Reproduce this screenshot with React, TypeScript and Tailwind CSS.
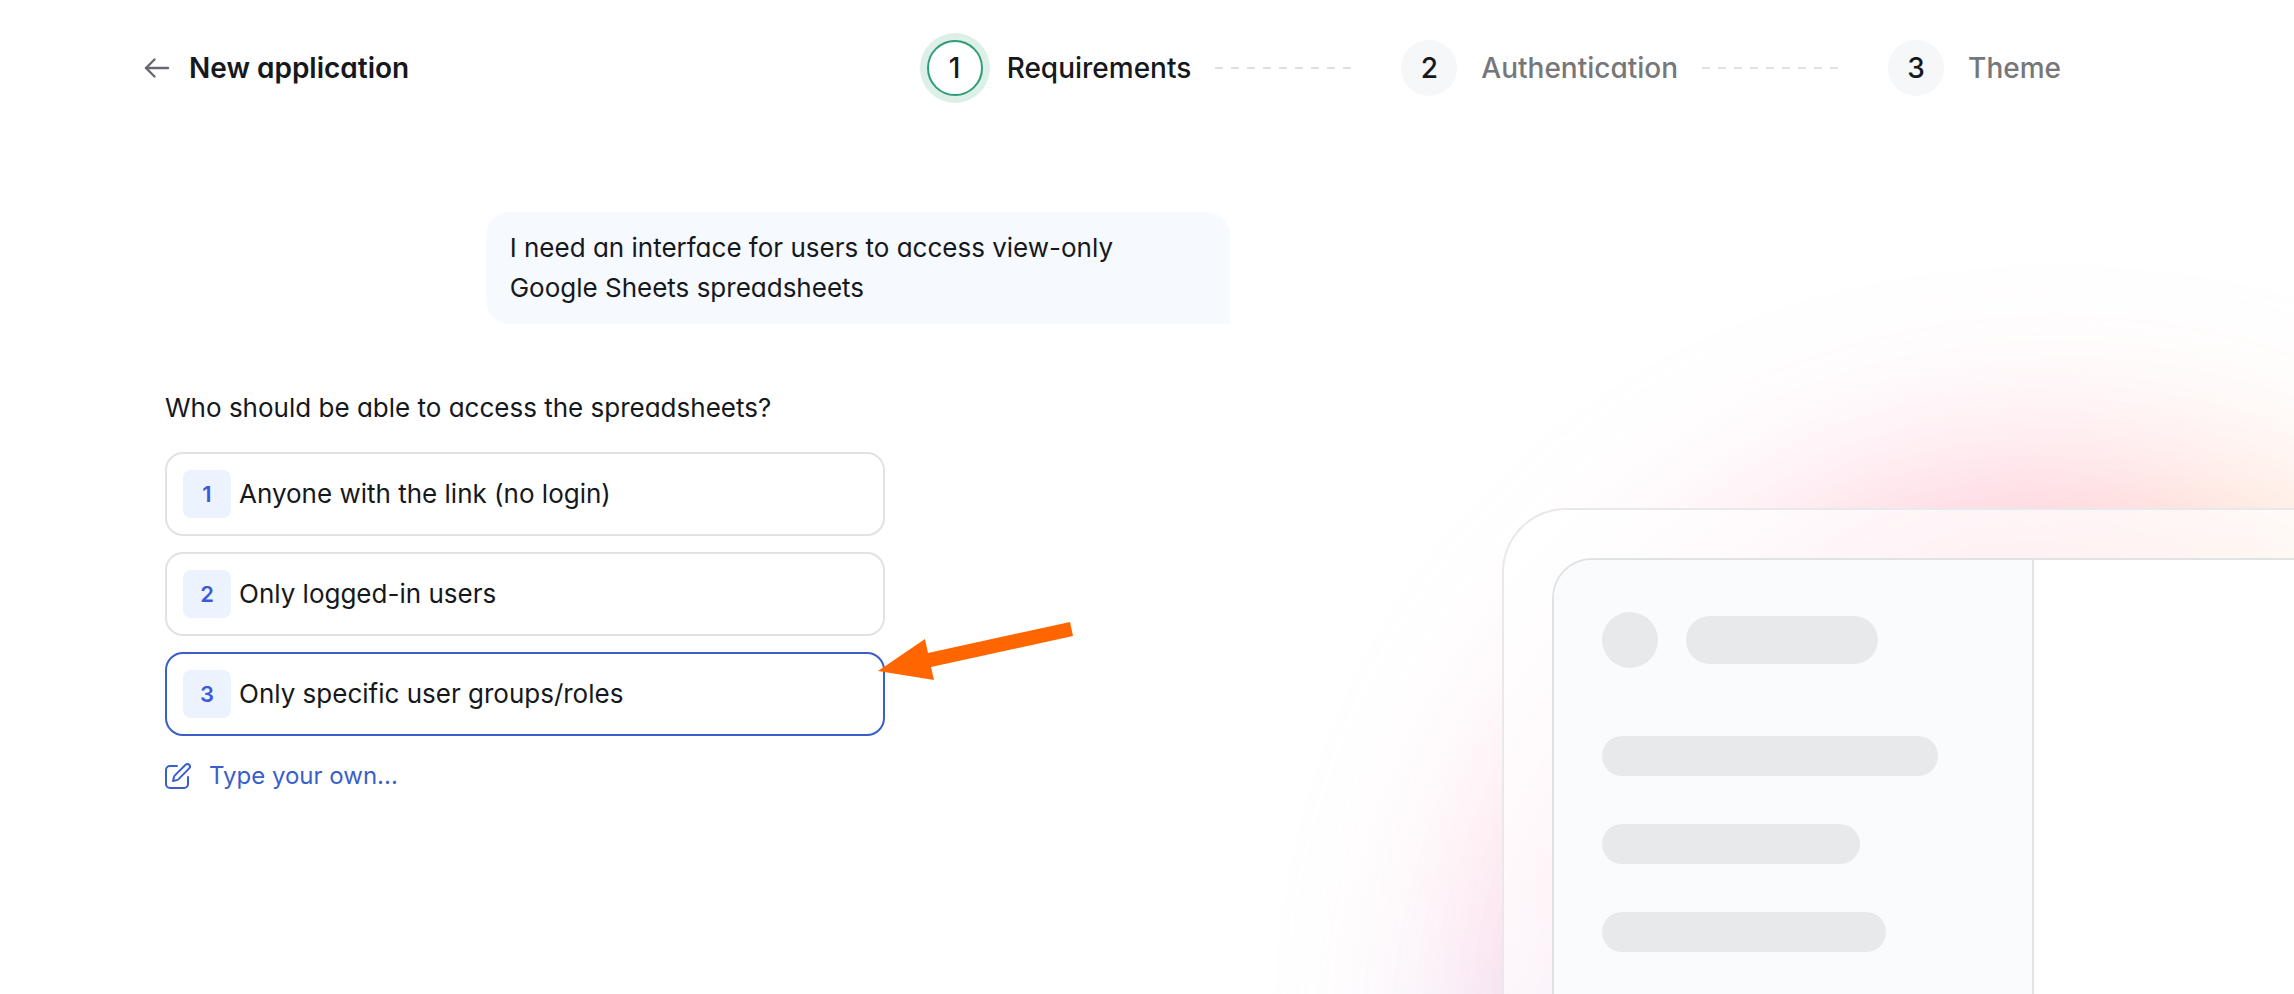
import { useState } from "react";
import clsx from "clsx";

const steps = ["Requirements", "Authentication", "Theme"];

const options = [
  "Anyone with the link (no login)",
  "Only logged-in users",
  "Only specific user groups/roles",
];

const skeletonRows = ["w-[336px]", "w-[258px]", "w-[284px]"];

const Stepper: React.FC<{ current: number }> = ({ current }) => {
  return (
    <ol className="flex items-center gap-12">
      {steps.map((step, index) => (
        <li key={step} className="flex items-center gap-6">
          <span
            className={clsx(
              "flex size-14 items-center justify-center rounded-full font-medium",
              index === current
                ? "border-2 border-[#2f9e77] bg-white ring-[7px] ring-[#dcf0e8]"
                : "bg-[#f5f7f9]",
            )}
          >
            {index + 1}
          </span>
          <span
            className={clsx("font-medium", index !== current && "text-[#76777a]")}
          >
            {step}
          </span>
          {index < steps.length - 1 && (
            <span className="h-0.5 w-[138px] bg-[repeating-linear-gradient(90deg,#e0e1e2_0_8px,transparent_8px_16px)]" />
          )}
        </li>
      ))}
    </ol>
  );
};

const BackIcon: React.FC = () => (
  <svg
    viewBox="0 0 28 28"
    fill="none"
    stroke="currentColor"
    strokeWidth="2.4"
    strokeLinecap="round"
    strokeLinejoin="round"
    className="size-7 text-[#686872]"
  >
    <path d="M25 14H3" />
    <path d="M11.5 5.5 3 14l8.5 8.5" />
  </svg>
);

const EditIcon: React.FC = () => (
  <svg
    viewBox="0 0 26 26"
    fill="none"
    stroke="currentColor"
    strokeWidth="2"
    strokeLinecap="round"
    strokeLinejoin="round"
    className="size-[26px]"
  >
    <path d="M12 3H5a4 4 0 0 0-4 4v14a4 4 0 0 0 4 4h14a4 4 0 0 0 4-4v-7" />
    <path d="M20.6 1.8a2.5 2.5 0 0 1 3.6 3.6L13.6 16.1a4 4 0 0 1-1.8 1L8 18l.9-3.8a4 4 0 0 1 1-1.8z" />
  </svg>
);

const Pointer: React.FC = () => (
  <svg
    viewBox="0 0 195 60"
    className="pointer-events-none absolute -top-8 right-0 h-[60px] w-[195px] translate-x-[188px]"
  >
    <path d="M0 51 47 19 50 33 192 2 195 16 53 47 56 60Z" fill="#ff6600" />
  </svg>
);

const Preview: React.FC = () => {
  return (
    <div className="relative flex flex-1 overflow-hidden pt-[372px] pl-60">
      <div className="absolute top-[364px] left-[244px] size-[1100px] rounded-full bg-[conic-gradient(#ff9cb8_0deg,#ffc08c_28deg,#ffe0a0_60deg,#ffd0e0_150deg,#a898f4_240deg,#c0a4f4_262deg,#ffb0c8_282deg,#ffb4c8_330deg,#ff94b4_352deg,#ff9cb8_360deg)] opacity-75 blur-[110px]" />
      <div className="relative flex flex-1 rounded-tl-[64px] border-t-2 border-l-2 border-[#e9e8ea] bg-white/70 pt-12 pl-12">
        <div className="flex flex-1 overflow-hidden rounded-tl-[40px] border-t-2 border-l-2 border-[#e1e2e3] bg-white">
          <div className="flex w-[480px] flex-col gap-12 border-r-2 border-[#e1e2e3] bg-[#fafbfd] px-12 pt-13">
            <div className="mb-5 flex items-center gap-7">
              <span className="size-14 rounded-full bg-[#e8e9eb]" />
              <span className="h-12 w-48 rounded-full bg-[#e8e9eb]" />
            </div>
            {skeletonRows.map((width) => (
              <span
                key={width}
                className={clsx("h-10 rounded-full bg-[#e8e9eb]", width)}
              />
            ))}
          </div>
        </div>
      </div>
    </div>
  );
};

export default function App() {
  const [selected, setSelected] = useState(2);

  return (
    <div className="flex min-h-screen flex-col bg-white font-['Inter',sans-serif] text-[26px] leading-10 text-[#15181c] [font-feature-settings:'cv11']">
      <header className="flex h-[136px] items-center justify-between pr-[233px] pl-[143px] text-[28px]">
        <a href="#" className="flex items-center gap-[18px] font-semibold">
          <BackIcon />
          New application
        </a>
        <Stepper current={0} />
      </header>
      <main className="flex flex-1">
        <section className="flex w-[55%] flex-col pt-[76px] pr-8 pl-[165px]">
          <p className="w-[744px] self-end rounded-3xl rounded-br-none bg-[#f6f9fe] px-6 py-4">
            I need an interface for users to access view-only Google Sheets
            spreadsheets
          </p>
          <h2 className="mt-16">Who should be able to access the spreadsheets?</h2>
          <ul className="mt-6 flex w-[720px] flex-col gap-4">
            {options.map((option, index) => (
              <li key={option} className="relative">
                <button
                  type="button"
                  aria-pressed={index === selected}
                  onClick={() => setSelected(index)}
                  className={clsx(
                    "flex h-[84px] w-full items-center gap-2 rounded-[18px] border-2 bg-white px-4 text-left",
                    index === selected ? "border-[#3a5fc8]" : "border-[#e2e2e3]",
                  )}
                >
                  <span className="flex size-12 items-center justify-center rounded-lg bg-[#edf2ff] text-[22px] font-semibold text-[#3b5bd6]">
                    {index + 1}
                  </span>
                  {option}
                </button>
                {index === 2 && <Pointer />}
              </li>
            ))}
          </ul>
          <button
            type="button"
            className="mt-5 flex items-center gap-[18px] self-start text-2xl leading-10 text-[#3a5fcb]"
          >
            <EditIcon />
            Type your own...
          </button>
        </section>
        <Preview />
      </main>
    </div>
  );
}
